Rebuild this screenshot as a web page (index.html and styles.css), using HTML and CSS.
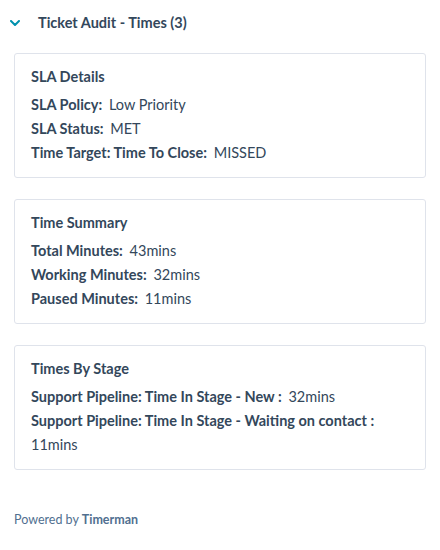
FILE: index.html
```html
<!DOCTYPE html>
<html>
<head>
<meta charset="utf-8">
<link rel="stylesheet" href="styles.css">
</head>
<body>
<div class="panel">
  <div class="header">
    <svg class="chevron" width="10" height="6" viewBox="0 0 10 6"><path d="M1 1 L5 5 L9 1" fill="none" stroke="#0091ae" stroke-width="2" stroke-linecap="round" stroke-linejoin="round"/></svg>
    <span class="title">Ticket Audit - Times (3)</span>
  </div>
  <div class="cards">
    <div class="card">
      <div class="card-title">SLA Details</div>
      <div class="row"><span class="label">SLA Policy:</span> Low Priority</div>
      <div class="row"><span class="label">SLA Status:</span> MET</div>
      <div class="row"><span class="label">Time Target: Time To Close:</span> MISSED</div>
    </div>
    <div class="card">
      <div class="card-title">Time Summary</div>
      <div class="row"><span class="label">Total Minutes:</span> 43mins</div>
      <div class="row"><span class="label">Working Minutes:</span> 32mins</div>
      <div class="row"><span class="label">Paused Minutes:</span> 11mins</div>
    </div>
    <div class="card">
      <div class="card-title">Times By Stage</div>
      <div class="row"><span class="label">Support Pipeline: Time In Stage - New :</span> 32mins</div>
      <div class="row"><span class="label">Support Pipeline: Time In Stage - Waiting on contact :</span> 11mins</div>
    </div>
  </div>
  <div class="footer">Powered by <span class="brand">Timerman</span></div>
</div>
</body>
</html>
```
FILE: styles.css
```css
html, body {
  margin: 0;
  padding: 0;
  background: #ffffff;
}
body {
  font-family: Lato, "Noto Sans", sans-serif;
  color: #33475b;
  font-size: 14.5px;
}
.panel {
  padding: 12px 14px 0 14px;
}
.header {
  display: flex;
  align-items: center;
  height: 20px;
}
.chevron {
  margin-left: -4px;
  margin-top: 1px;
  width: 10px;
  height: 6px;
}
.title {
  margin-left: 18px;
  font-weight: 700;
  font-size: 14.5px;
}
.cards {
  margin-top: 21px;
  display: flex;
  flex-direction: column;
  gap: 21px;
}
.card {
  border: 1px solid #dfe3eb;
  border-radius: 3px;
  padding: 13px 16px 12px 16px;
}
.card-title {
  font-weight: 700;
  line-height: 20px;
  margin-bottom: 6px;
}
.row {
  line-height: 24px;
}
.label {
  font-weight: 700;
  margin-right: 3px;
}
.footer {
  margin-top: 42px;
  font-size: 12.5px;
  line-height: 16px;
  color: #516f90;
}
.brand {
  font-weight: 700;
}
```
